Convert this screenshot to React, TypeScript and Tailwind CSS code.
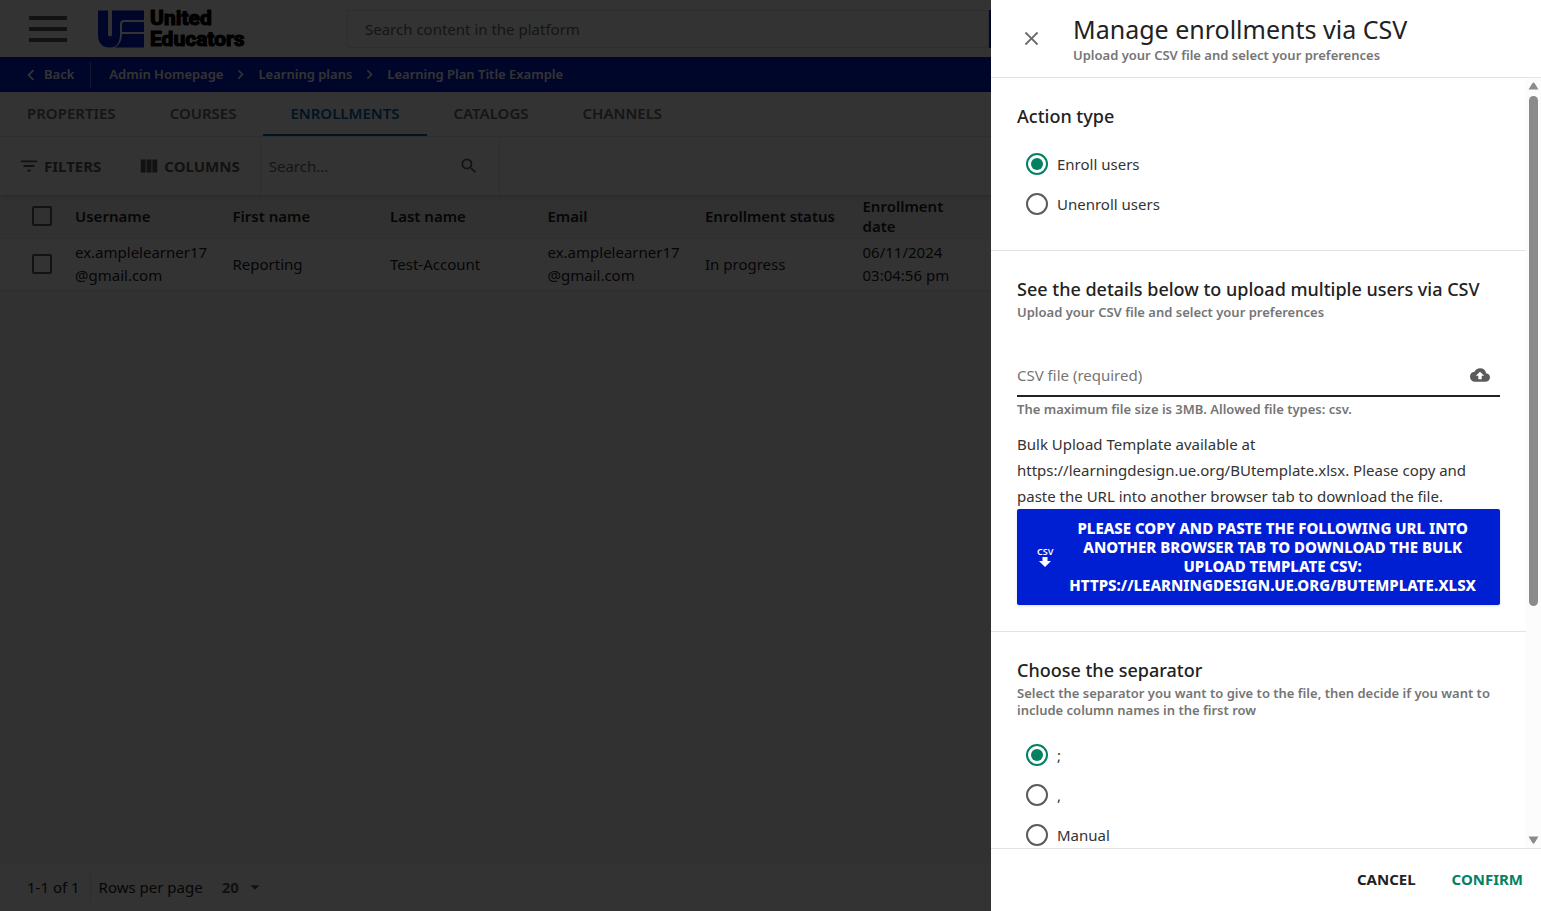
import { useState } from "react";
import type { ReactNode } from "react";
import {
  MdArrowDropDown,
  MdChevronRight,
  MdClose,
  MdCloudUpload,
  MdFilterList,
  MdSearch,
  MdViewColumn,
} from "react-icons/md";

const tabs = ["Properties", "Courses", "Enrollments", "Catalogs", "Channels"];

const columns = [
  "Username",
  "First name",
  "Last name",
  "Email",
  "Enrollment status",
  "Enrollment\ndate",
];

const rows = [
  [
    "ex.amplelearner17@gmail.com",
    "Reporting",
    "Test-Account",
    "ex.amplelearner17@gmail.com",
    "In progress",
    "06/11/2024 03:04:56 pm",
  ],
];

const Logo = () => (
  <a href="#" aria-label="United Educators" className="flex items-center gap-1.5">
    <svg width="46" height="38" viewBox="0 0 46 37" className="fill-[#0019d2]">
      <path d="M0 0H10V24q0 2 2 2t2-2V0H46V9.500H26q-4 0-4 4V23Q22 37 12 37Q0 37 0 24Z" />
      <path d="M24 14q0-2.500 2.500-2.500H46V21.500H24Z" />
      <path d="M24 23.500H46V37H17Q24 33 24 23.500Z" />
    </svg>
    <span className="font-['Roboto'] text-[21px]/[21px] font-extrabold text-black [-webkit-text-stroke:1px_black]">
      United
      <br />
      Educators
    </span>
  </a>
);

const Header = () => (
  <header className="flex h-[57px] shrink-0 items-center bg-white pl-[29px]">
    <button aria-label="Menu" className="mr-[31px] flex w-[38px] flex-col gap-[7px]">
      <span className="h-1 bg-[#5b5b5b]" />
      <span className="h-1 bg-[#5b5b5b]" />
      <span className="h-1 bg-[#5b5b5b]" />
    </button>
    <div className="w-[220px] shrink-0">
      <Logo />
    </div>
    <input
      aria-label="Search content in the platform"
      placeholder="Search content in the platform"
      className="ml-[29px] h-[38px] w-[642px] border border-[#e4e4e4] px-[17px] text-[15px] placeholder:text-[#6b6b6b]"
    />
    <button aria-label="Search" className="h-[38px] w-12 bg-[#0019d2]" />
  </header>
);

const Breadcrumb = () => (
  <nav className="flex h-[35px] shrink-0 items-center bg-[#0019d2] pl-5 text-[13px] font-semibold text-white">
    <a href="#" className="flex h-[26px] items-center gap-0.5 border-r border-white/40 pr-4">
      <MdChevronRight className="size-[22px] rotate-180" />
      Back
    </a>
    <a href="#" className="ml-[18px]">
      Admin Homepage
    </a>
    <MdChevronRight className="mx-2 size-[19px]" />
    <a href="#">Learning plans</a>
    <MdChevronRight className="mx-2 size-[19px]" />
    <a href="#">Learning Plan Title Example</a>
  </nav>
);

const Tabs = () => (
  <nav className="flex h-[45px] shrink-0 border-b border-[#e4e4e4] bg-white text-[15px] font-semibold uppercase">
    {tabs.map((tab) => (
      <a
        key={tab}
        href="#"
        className={
          tab === "Enrollments"
            ? "flex items-center border-b-2 border-[#0465ac] px-[27px] text-[#0465ac]"
            : "flex items-center border-b-2 border-transparent px-[27px] text-[#6b6b6b]"
        }
      >
        {tab}
      </a>
    ))}
  </nav>
);

const Toolbar = () => (
  <div className="flex h-[58px] shrink-0 items-stretch bg-white text-[15px] text-[#5b5b5b] shadow-md">
    <button className="flex items-center gap-1 pl-[18px] font-bold">
      <MdFilterList className="size-[22px]" />
      FILTERS
    </button>
    <button className="ml-[37px] flex items-center gap-1 pr-5 font-bold">
      <MdViewColumn className="size-[22px]" />
      COLUMNS
    </button>
    <div className="flex w-[240px] items-center border-x border-[#e4e4e4] pr-5 pl-2">
      <input
        aria-label="Search enrollments"
        placeholder="Search..."
        className="min-w-0 flex-1 placeholder:text-[#6b6b6b]"
      />
      <MdSearch className="size-5" />
    </div>
  </div>
);

const Checkbox = ({ label }: { label: string }) => (
  <input
    type="checkbox"
    aria-label={label}
    className="ml-8 block size-5 appearance-none rounded-xs border-2 border-[#5b5b5b]"
  />
);

const EnrollmentsTable = () => (
  <table className="w-full table-fixed text-[15px] text-[#222]">
    <colgroup>
      <col className="w-[75px]" />
      {columns.map((column) => (
        <col key={column} />
      ))}
      <col className="w-[521px]" />
    </colgroup>
    <thead>
      <tr className="h-[43px] border-b border-[#e4e4e4] text-left">
        <th>
          <Checkbox label="Select all" />
        </th>
        {columns.map((column) => (
          <th key={column} className="pr-4 leading-5 font-semibold whitespace-pre-line">
            {column}
          </th>
        ))}
        <td />
      </tr>
    </thead>
    <tbody>
      {rows.map((row) => (
        <tr key={row[0]} className="h-[52px] border-b border-[#e4e4e4] bg-white leading-[23px]">
          <td>
            <Checkbox label="Select row" />
          </td>
          {row.map((cell, i) => (
            <td key={columns[i]} className="pr-4 wrap-break-word">
              {cell}
            </td>
          ))}
          <td />
        </tr>
      ))}
    </tbody>
  </table>
);

const Pagination = () => (
  <footer className="mt-auto flex h-12 shrink-0 items-center bg-white pl-[27px] text-[15px] text-[#222]">
    <span className="mr-2.5">1-1 of 1</span>
    <label htmlFor="page-size" className="flex h-7 items-center border-l border-[#e4e4e4] pl-2">
      Rows per page
    </label>
    <div className="relative ml-[19px] flex items-center">
      <select id="page-size" className="w-11 appearance-none font-bold text-[#5b5b5b]">
        <option>20</option>
        <option>50</option>
      </select>
      <MdArrowDropDown className="pointer-events-none absolute right-0 size-[22px] text-[#5b5b5b]" />
    </div>
  </footer>
);

const Section = ({
  title,
  hint,
  children,
}: {
  title: string;
  hint?: string;
  children: ReactNode;
}) => (
  <section className="border-b border-[#e2e2e2] px-[26px] pt-[25px] pb-[26px]">
    <h2 className="text-lg/[26px] font-medium">{title}</h2>
    {hint && <p className="mt-0.5 text-[13px]/[17px] font-semibold text-[#757575]">{hint}</p>}
    {children}
  </section>
);

const RadioGroup = ({
  name,
  options,
  className,
}: {
  name: string;
  options: string[];
  className: string;
}) => {
  const [value, setValue] = useState(options[0]);

  return (
    <div className={className}>
      {options.map((option) => (
        <label
          key={option}
          className="flex h-10 items-center gap-[9px] pl-[9px] text-[15px] text-[#333]"
        >
          <input
            type="radio"
            name={name}
            checked={value === option}
            onChange={() => setValue(option)}
            className="size-[22px] appearance-none rounded-full border-2 border-[#5b5b5b] checked:border-[#048163] checked:bg-[#048163] checked:bg-clip-content checked:p-[3px]"
          />
          {option}
        </label>
      ))}
    </div>
  );
};

const Scrollbar = () => (
  <div aria-hidden className="flex w-[15px] shrink-0 flex-col items-center bg-[#fcfcfc] py-1">
    <svg width="11" height="8" viewBox="0 0 11 8" className="fill-[#8b8b8b]">
      <path d="M4.500 1Q5.500 0 6.500 1L10.500 7.500H0.500Z" />
    </svg>
    <div className="mt-1.5 h-[510px] w-[9px] rounded-full bg-[#8b8b8b]" />
    <svg width="11" height="8" viewBox="0 0 11 8" className="mt-auto fill-[#8b8b8b]">
      <path d="M4.500 7Q5.500 8 6.500 7L10.500 0.500H0.500Z" />
    </svg>
  </div>
);

const CsvDrawer = () => (
  <aside
    role="dialog"
    aria-labelledby="drawer-title"
    className="fixed inset-y-0 right-0 flex w-[550px] flex-col bg-white text-[#222]"
  >
    <header className="flex h-[78px] shrink-0 items-center border-b border-[#e2e2e2] pl-[29px]">
      <button aria-label="Close" className="mr-[30px] text-[#6b6b6b]">
        <MdClose className="size-[23px]" />
      </button>
      <div className="pb-0.5">
        <h1 id="drawer-title" className="text-[25px]/[36px]">
          Manage enrollments via CSV
        </h1>
        <p className="text-[13px]/[17px] font-semibold text-[#757575]">
          Upload your CSV file and select your preferences
        </p>
      </div>
    </header>

    <div className="flex min-h-0 flex-1">
      <div className="min-w-0 flex-1 overflow-y-auto [scrollbar-width:none]">
        <Section title="Action type">
          <RadioGroup
            name="action"
            options={["Enroll users", "Unenroll users"]}
            className="mt-[15px]"
          />
        </Section>

        <Section
          title="See the details below to upload multiple users via CSV"
          hint="Upload your CSV file and select your preferences"
        >
          <div className="mt-[34px] flex h-[42px] items-center border-b-2 border-[#222]">
            <input
              aria-label="CSV file"
              placeholder="CSV file (required)"
              className="min-w-0 flex-1 text-[15px] placeholder:text-[#757575]"
            />
            <button aria-label="Upload file" className="mr-2.5 text-[#5b5b5b]">
              <MdCloudUpload className="size-5" />
            </button>
          </div>
          <p className="mt-1 text-[13px]/[17px] font-semibold text-[#757575]">
            The maximum file size is 3MB. Allowed file types: csv.
          </p>
          <p className="mt-[13px] text-[15px]/[26px] text-[#333]">
            Bulk Upload Template available at https://learningdesign.ue.org/BUtemplate.xlsx. Please
            copy and paste the URL into another browser tab to download the file.
          </p>
          <button className="flex w-full items-center gap-2 rounded-xs bg-[#001ed2] py-2.5 pr-4 pl-5 text-white shadow">
            <span className="flex flex-col items-center text-[9px]/[10px] font-semibold">
              CSV
              <svg width="12" height="10" viewBox="0 0 12 10" className="fill-white">
                <path d="M3.500 0h5v4H12L6 10 0 4h3.500z" />
              </svg>
            </span>
            <span className="flex-1 text-center text-[15px]/[19px] font-extrabold uppercase">
              Please copy and paste the following URL into another browser tab to download the bulk
              upload template CSV: https://learningdesign.ue.org/BUtemplate.xlsx
            </span>
          </button>
        </Section>

        <Section
          title="Choose the separator"
          hint="Select the separator you want to give to the file, then decide if you want to include column names in the first row"
        >
          <RadioGroup name="separator" options={[";", ",", "Manual"]} className="mt-4" />
        </Section>
      </div>
      <Scrollbar />
    </div>

    <footer className="flex h-[63px] shrink-0 items-center justify-end gap-9 border-t border-[#e2e2e2] pr-[18px] pb-0.5 text-[15px] font-bold">
      <button>CANCEL</button>
      <button className="text-[#048163]">CONFIRM</button>
    </footer>
  </aside>
);

const App = () => {
  return (
    <div className="font-['Noto_Sans','Open_Sans',sans-serif]">
      <main className="flex h-screen flex-col bg-[#f5f5f5]">
        <Header />
        <Breadcrumb />
        <Tabs />
        <Toolbar />
        <EnrollmentsTable />
        <Pagination />
      </main>
      <div className="fixed inset-0 bg-black/80" />
      <CsvDrawer />
    </div>
  );
};
export default App;
